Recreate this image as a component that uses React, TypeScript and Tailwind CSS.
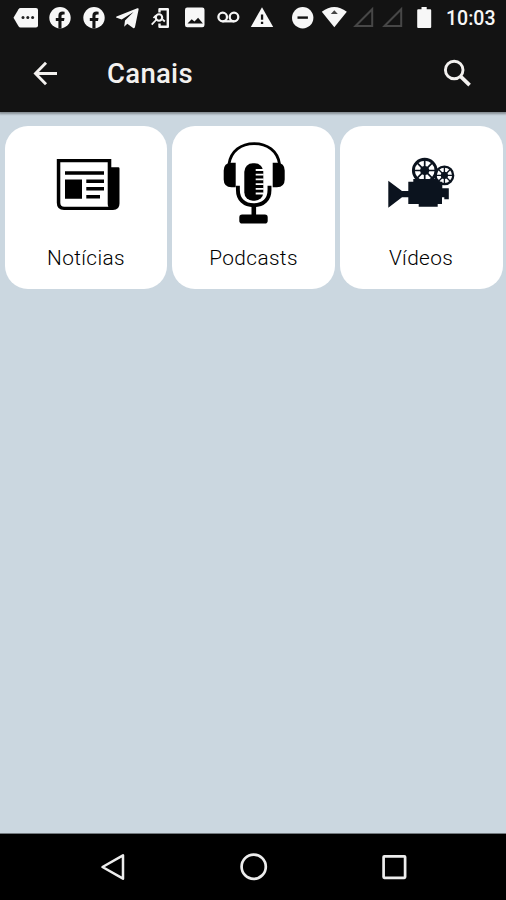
import type { ReactNode } from "react";

type GlyphProps = { box: string; className: string; children: ReactNode };

function Glyph({ box, className, children }: GlyphProps) {
  return (
    <svg viewBox={box} className={`block shrink-0 ${className}`} fill="currentColor" aria-hidden="true">
      {children}
    </svg>
  );
}

function FacebookGlyph({ className }: { className: string }) {
  return (
    <Glyph box="0 0 24 24" className={className}>
      <circle cx="12" cy="11.7" r="10.7" />
      <path d="M10.4 22.400V15H7.800v-3.100h2.600V9.700c0-2.700 1.600-4.100 4-4.100l2.200.2v2.600h-1.400c-1.300 0-1.700.8-1.700 1.600v1.900h3L16 15h-2.500v7.400z" fill="#131313" />
    </Glyph>
  );
}

function SignalGlyph({ className }: { className: string }) {
  return (
    <Glyph box="0 0 24 24" className={className}>
      <path d="M3.500 20 20.200 3.200V20z" fill="none" stroke="#474747" strokeWidth="2" />
    </Glyph>
  );
}

function StatusBar() {
  return (
    <div className="flex h-9 items-center pl-3 text-[#f7f7f7]">
      <Glyph box="0 0 28 24" className="h-6 w-7">
        <path d="M8.500 2H24q2 0 2 2v15.500q0 2-2 2H8.500q-1.200 0-2-1.200L1.500 11.700l5-8.500Q7.300 2 8.500 2z" />
        <g fill="#222"><circle cx="11" cy="11.500" r="1.500" /><circle cx="15.800" cy="11.500" r="1.500" /><circle cx="20.600" cy="11.500" r="1.500" /></g>
      </Glyph>
      <FacebookGlyph className="ml-2 size-6" />
      <FacebookGlyph className="ml-[9.500px] size-6" />
      <Glyph box="0 0 28 24" className="ml-[8.500px] h-6 w-7">
        <path d="M23.300 2.200 2.500 10.500q-1.300.7.2 1.300l5 1.600L19.500 6 11 14.500l-.8 6.200 3.100-3 5.800 4.200q1.500.9 1.900-.8L24.600 3.600q.3-1.800-1.300-1.400z" />
      </Glyph>
      <Glyph box="0 0 24 24" className="ml-1.5 size-6">
        <g fill="none" stroke="currentColor">
          <path d="M11.500 6.500V3.200h8.300v17.600h-8.300v-3.300" strokeWidth="2.400" strokeLinejoin="round" />
          <circle cx="11" cy="11.500" r="3.200" strokeWidth="2.100" />
          <path d="m8.500 13.500-4.800 5.200M8 9.300 5.500 12m9 1.300 2.300 2.200" strokeWidth="1.800" />
        </g>
      </Glyph>
      <Glyph box="0 0 24 24" className="ml-2.5 size-6">
        <rect x="3" y="1.500" width="19.500" height="19.700" rx="2.200" />
        <path d="m5.500 17.500 4.200-4.200 2.800 2.200 3.600-3.800 4.800 5.800z" fill="#131313" />
      </Glyph>
      <Glyph box="0 0 28 24" className="ml-2 h-6 w-7">
        <g fill="none" stroke="currentColor" strokeWidth="2.300"><circle cx="8.700" cy="11" r="4.300" /><circle cx="20" cy="11" r="4.300" /><path d="M8.500 15.300h11.700" /></g>
      </Glyph>
      <Glyph box="0 0 24 24" className="ml-2 size-6">
        <path d="M12 1.300 23.200 21H.8z" />
        <path d="M10.900 8.500h2.300v5.200h-2.300zm0 7.200h2.300V18h-2.300z" fill="#131313" />
      </Glyph>
      <Glyph box="0 0 24 24" className="ml-4 size-6">
        <circle cx="12.700" cy="11.800" r="10.700" />
        <rect x="7.500" y="10.400" width="10.400" height="2.400" fill="#131313" />
      </Glyph>
      <Glyph box="0 0 28 24" className="ml-1.5 h-6 w-7">
        <path d="M1.800 5.700q12.400-9.600 25 0L14.300 21.200z" />
        <path d="M10.800 7.900 14.300 4.300l3.500 3.600z" fill="#444" />
      </Glyph>
      <SignalGlyph className="ml-1 size-6" />
      <SignalGlyph className="ml-[5px] size-6" />
      <Glyph box="0 0 20 24" className="ml-[9px] h-6 w-5">
        <path d="M7.500 1h5.200v2.200h3.500q1 0 1 1v16.900q0 1-1 1H4.200q-1 0-1-1V4.200q0-1 1-1h3.300z" />
      </Glyph>
      <span className="ml-3 pt-0.5 text-[19.500px] leading-6 font-medium">10:03</span>
    </div>
  );
}

function AppBar() {
  return (
    <header className="z-10 h-[112px] shrink-0 bg-[#131313] shadow-[0_1px_2px_1px_rgba(0,0,0,0.35)]">
      <StatusBar />
      <div className="flex h-[76px] items-center text-[#f3f1ef]">
        <Glyph box="0 0 32 32" className="ml-[30px] size-8">
          <path d="M27 15.500H6.500M16 4.800 5.500 15.500 16 26.200" fill="none" stroke="currentColor" strokeWidth="2.900" />
        </Glyph>
        <h1 className="ml-[45px] text-[27.500px] leading-8 font-medium tracking-[0.300px]">Canais</h1>
        <Glyph box="0 0 32 32" className="mr-[33px] ml-auto size-8">
          <g fill="none" stroke="currentColor"><circle cx="13.200" cy="12" r="8.800" strokeWidth="2.900" /><path d="m19.300 18.200 9.300 9" strokeWidth="3.700" /></g>
        </Glyph>
      </div>
    </header>
  );
}

function NewsIcon() {
  return (
    <Glyph box="50 139 72 88" className="h-[88px] w-[72px] text-black">
      <path d="M111.300 167.300h7q1.200 0 1.200 1.200v35q0 6.500-6.500 6.500H64q-7.200 0-7.200-7.200V159h54.500zm-3.600-5H60.300v40.400q0 4 4 4h44.100q-.7-1-.7-3z" fillRule="evenodd" />
      <path d="M65 171.200h39v3.600H65zm0 8.200h17v19.400H65zm21.300.1H104v3.600H86.300zm0 7.400H104v3.600H86.300zm0 8H100v3.600H86.300z" />
    </Glyph>
  );
}

function PodcastIcon() {
  return (
    <Glyph box="218 139 72 88" className="h-[88px] w-[72px] text-black">
      <path d="M229 164c2-13 12-20.300 25.200-20.300S277.500 151 279.500 164" fill="none" stroke="currentColor" strokeWidth="2.800" />
      <path d="M235.700 162.700v24.600h-4.200q-7.800-.3-7.800-7.800v-9q0-7.500 7.800-7.800zm37 0v24.600h4.200q7.800-.3 7.800-7.800v-9q0-7.500-7.800-7.800z" />
      <rect x="244.300" y="163.300" width="19" height="37.500" rx="8.500" />
      <path d="M255.700 170h8m-8 4.700h8m-8 4.700h8m-8 4.700h8m-8 4.700h8m-8 4.700h8" stroke="#fff" strokeWidth="1.800" />
      <path d="M237.900 185.700v4.300c0 9.500 6.200 15.300 15.900 15.300s15.700-5.800 15.700-15.300v-4.300" fill="none" stroke="currentColor" strokeWidth="3.900" />
      <path d="M251.500 206h4.600v9h-4.600z" />
      <rect x="239.300" y="214.600" width="28.400" height="8.900" rx="2.800" />
    </Glyph>
  );
}

function Reel({ cx, cy, r }: { cx: number; cy: number; r: number }) {
  return (
    <g transform={`translate(${cx} ${cy}) scale(${r / 12.7})`} stroke="currentColor">
      <circle r="11.300" fill="#fff" strokeWidth="2.900" />
      <path d="M0-11V11M-11 0H11M-7.800-7.800 7.800 7.800M-7.800 7.800 7.800-7.800" strokeWidth="1.700" />
      <circle r="4.600" stroke="none" />
    </g>
  );
}

function VideoIcon() {
  return (
    <Glyph box="385 139 72 88" className="h-[88px] w-[72px] text-[#0b131e]">
      <Reel cx={444.400} cy={175.400} r={9.900} />
      <Reel cx={424.700} cy={170.500} r={12.700} />
      <path d="M388.300 180.800 402 191h6.300v-9.300h5V179h25v2.700h4v6.600h6.500v10.900h-4.500v-2H442v6.800h-4.300v2.700h-19v-2.700h-10.400v-6.800H402l-13.700 10.600z" />
    </Glyph>
  );
}

const channels = [
  { name: "Notícias", icon: <NewsIcon /> },
  { name: "Podcasts", icon: <PodcastIcon /> },
  { name: "Vídeos", icon: <VideoIcon /> },
];

export default function App() {
  return (
    <div className="flex h-[900px] w-[506px] flex-col overflow-hidden bg-[#cbd7e0] font-[Roboto,sans-serif]">
      <AppBar />
      <main className="grid flex-1 grid-cols-3 content-start gap-[4.700px] pt-[14px] pr-[3.500px] pl-[4.600px]">
        {channels.map(({ name, icon }) => (
          <section key={name} className="flex h-[163px] flex-col items-center rounded-[23px] bg-white pt-[13px]">
            {icon}
            <h2 className="mt-[17px] text-[20.800px] leading-7 font-light tracking-[0.400px] text-black">{name}</h2>
          </section>
        ))}
      </main>
      <nav className="flex h-[67px] shrink-0 items-center border-t border-[#737a7f] bg-black text-[#ededed]">
        <Glyph box="0 0 32 32" className="ml-[98px] size-8">
          <path d="M25 4.300v23.400L4.500 16z" fill="none" stroke="currentColor" strokeWidth="2.500" strokeLinejoin="round" />
        </Glyph>
        <Glyph box="0 0 32 32" className="ml-[108px] size-8">
          <circle cx="15.700" cy="15.700" r="12.100" fill="none" stroke="currentColor" strokeWidth="2.700" />
        </Glyph>
        <Glyph box="0 0 32 32" className="ml-[108px] size-8">
          <rect x="5.600" y="5.300" width="21.500" height="21.500" rx=".7" fill="none" stroke="currentColor" strokeWidth="2.700" />
        </Glyph>
      </nav>
    </div>
  );
}
